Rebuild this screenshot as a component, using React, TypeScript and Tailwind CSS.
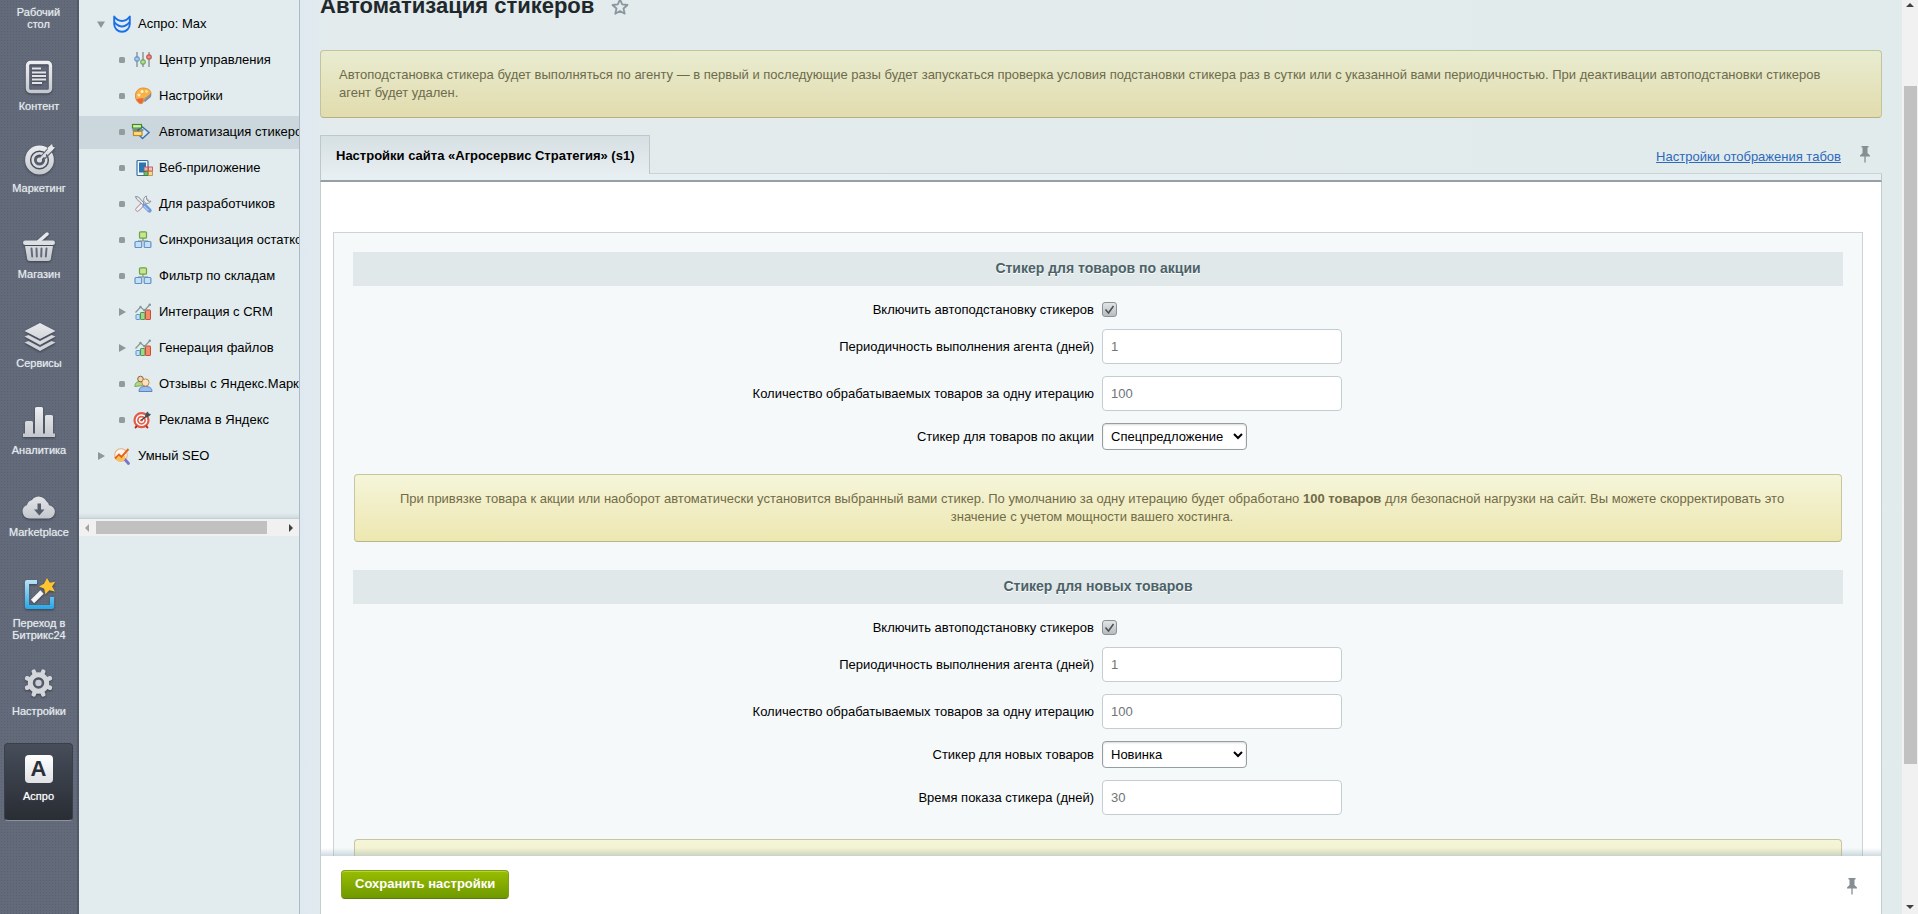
import { useState } from "react";
import type { ReactNode } from "react";

/* ---------- left bar icons ---------- */

function BarSvg({ children }: { children: ReactNode }) {
  return (
    <svg
      width="32"
      height="32"
      viewBox="0 0 32 32"
      className="overflow-visible drop-shadow-[0_1px_1px_rgba(30,35,45,0.6)]"
      aria-hidden="true"
    >
      <defs>
        <linearGradient id="silver" x1="0" y1="0" x2="0" y2="32" gradientUnits="userSpaceOnUse">
          <stop offset="0" stopColor="#f0f1f3" />
          <stop offset="1" stopColor="#c3c7cd" />
        </linearGradient>
        <linearGradient id="sky" x1="0" y1="0" x2="0" y2="32" gradientUnits="userSpaceOnUse">
          <stop offset="0" stopColor="#c4e6f6" />
          <stop offset="1" stopColor="#1fa6ea" />
        </linearGradient>
      </defs>
      {children}
    </svg>
  );
}

const contentIcon = (
  <BarSvg>
    <rect x="4.5" y="1.5" width="23" height="29" rx="3" fill="none" stroke="url(#silver)" strokeWidth="3.4" />
    <path d="M9 7.5h9M9 11.5h14M9 15h14M9 18.500h14M9 22h10" stroke="#e2e4e8" strokeWidth="1.8" />
  </BarSvg>
);

const marketingIcon = (
  <BarSvg>
    <circle cx="16.5" cy="17" r="12" fill="none" stroke="url(#silver)" strokeWidth="4.8" />
    <circle cx="16.5" cy="17" r="6.8" fill="none" stroke="#dadde1" strokeWidth="2.6" />
    <circle cx="16.5" cy="17" r="2.6" fill="#dadde1" />
    <path d="M17.5 14L27 3.5M20 17.500L30 7.500" stroke="#636a79" strokeWidth="1.300" />
    <path d="M16.5 17L27.500 5.500" stroke="#dadde1" strokeWidth="2.4" />
    <path d="M24.500 8.500l.5-4 4-3.500.8 2.700 2.200.8-3.500 3.800z" fill="#e6e8eb" />
  </BarSvg>
);

const shopIcon = (
  <BarSvg>
    <path d="M15 13L24 5" stroke="#e6e8eb" strokeWidth="3.400" strokeLinecap="round" />
    <rect x="0" y="11.500" width="32" height="4.500" rx="2.200" fill="#dcdfe3" />
    <path d="M2 17h28l-2 12a3 3 0 0 1-3 3H7a3 3 0 0 1-3-3z" fill="url(#silver)" />
    <path d="M8.500 19.500l.7 8M13.500 19.500l.3 8M18.500 19.500l-.3 8M23.500 19.500l-.7 8" stroke="#636a79" strokeWidth="2" strokeLinecap="round" />
  </BarSvg>
);

const servicesIcon = (
  <BarSvg>
    <path d="M17 5l15.500 8L17 21 1.500 13z" fill="url(#silver)" />
    <path d="M1.500 18.500l4-1.500L17 23l11.500-6 4 1.500L17 27z" fill="#d5d8dd" />
    <path d="M1.500 24.500l4-1.500L17 29l11.500-6 4 1.500L17 33z" fill="#cfd3d8" />
  </BarSvg>
);

const analyticsIcon = (
  <BarSvg>
    <path
      d="M0 28.500h2V17.500a1.500 1.500 0 0 1 1.500-1.500h5a1.500 1.500 0 0 1 1.500 1.500V28.500h2V3.500A1.500 1.500 0 0 1 13.500 2h5A1.500 1.500 0 0 1 20 3.500V28.500h2V11.500A1.500 1.500 0 0 1 23.500 10h5a1.500 1.500 0 0 1 1.500 1.500V28.500h2v3.500H0z"
      fill="url(#silver)"
    />
  </BarSvg>
);

const cloudIcon = (
  <BarSvg>
    <path
      d="M6.500 31.500A7 7 0 0 1 4 18 6.500 6.500 0 0 1 9 13 8.500 8.500 0 0 1 23.500 14.500a5.500 5.500 0 0 1 2.500 3.700A6.700 6.700 0 0 1 26 31.500z"
      fill="url(#silver)"
    />
    <path d="M14.500 16.500h3.500v6h3.500l-5.200 6-5.300-6h3.500z" fill="#565d6b" />
  </BarSvg>
);

const wandIcon = (
  <BarSvg>
    <path d="M14 4H4v25h25V19" fill="none" stroke="url(#sky)" strokeWidth="4.200" strokeLinejoin="round" />
    <path d="M9.500 23.500L19 14" stroke="#f4f6f8" strokeWidth="4.600" />
    <path d="M24 0l2.800 4.800 5.500-1-3.200 4.700 2.800 5-5.500-1.200-4 4-1.200-5.500-5.200-2.300 5-2.700z" fill="#ffc531" />
  </BarSvg>
);

const gearIcon = (
  <BarSvg>
    <g transform="translate(15.500 17)">
      {[22.5, 67.5, 112.5, 157.5, 202.5, 247.5, 292.5, 337.5].map((a) => (
        <rect key={a} x="-2.200" y="-14.500" width="4.400" height="8" rx="1.800" fill="#d3d6db" transform={`rotate(${a})`} />
      ))}
      <circle r="8.200" fill="none" stroke="#d3d6db" strokeWidth="5" />
      <circle r="3.200" fill="#c9cdd3" />
    </g>
  </BarSvg>
);

const asproIcon = (
  <span className="mt-1 flex h-7 w-7 items-center justify-center rounded bg-gradient-to-b from-white to-[#dfe1e4] text-[22px] leading-7 font-black text-[#2b2f37]">
    A
  </span>
);

const barItems = [
  { label: "Контент", icon: contentIcon, gap: "mt-[31px]" },
  { label: "Маркетинг", icon: marketingIcon, gap: "mt-[31px]" },
  { label: "Магазин", icon: shopIcon, gap: "mt-[35px]" },
  { label: "Сервисы", icon: servicesIcon, gap: "mt-[38px]" },
  { label: "Аналитика", icon: analyticsIcon, gap: "mt-9" },
  { label: "Marketplace", icon: cloudIcon, gap: "mt-[31px]" },
  { label: "Переход в Битрикс24", icon: wandIcon, gap: "mt-10" },
  { label: "Настройки", icon: gearIcon, gap: "mt-[25px]" },
];

function IconBar() {
  return (
    <nav className="flex w-[79px] shrink-0 flex-col overflow-hidden border-r-2 border-[#535a69] bg-[#636a79] bg-[radial-gradient(rgba(50,56,72,0.2)_25%,transparent_30%)] bg-[length:3px_3px] text-center text-[11px] leading-3 text-[#e3eaee] [text-shadow:0_0_1px_rgba(227,234,238,0.7)]">
      <a href="#desktop" className="px-3 pt-[6px]">
        Рабочий стол
      </a>
      {barItems.map((item) => (
        <a key={item.label} href="#" className={`flex flex-col items-center gap-[7px] pr-[7px] pl-2 ${item.gap}`}>
          {item.icon}
          <span>{item.label}</span>
        </a>
      ))}
      <a
        href="#aspro"
        className="mx-1 mt-[26px] flex h-[78px] flex-col items-center gap-[7px] rounded-[4px] border border-[#3a404b] border-b-[#8d939e] bg-gradient-to-b from-[#474e5a] to-[#292d34] pt-[7px] text-white"
      >
        <span className="h-8">{asproIcon}</span>
        Аспро
      </a>
    </nav>
  );
}

/* ---------- module menu ---------- */

function MenuSvg({ children }: { children: ReactNode }) {
  return (
    <svg width="18" height="18" viewBox="0 0 18 18" className="shrink-0 overflow-visible" aria-hidden="true">
      {children}
    </svg>
  );
}

const shieldIcon = (
  <MenuSvg>
    <path d="M1.200 1.500C4 5.500 7 6 9 6s5-.5 7.800-4.500V9A7.800 7.800 0 0 1 1.200 9z" fill="none" stroke="#1b6fe8" strokeWidth="1.900" strokeLinejoin="round" />
    <path d="M1.500 7.500C5 11 7 11.500 9 11.500s4-.5 7.500-4" fill="none" stroke="#1b6fe8" strokeWidth="1.900" />
  </MenuSvg>
);

const slidersIcon = (
  <MenuSvg>
    <path d="M3 1v15M9 1v15M15 1v15" stroke="#7a8186" strokeWidth="1.200" />
    <rect x=".8" y="6" width="4.400" height="4" rx="1" fill="#a3cbee" stroke="#4a82bd" strokeWidth=".9" />
    <rect x="6.800" y="9" width="4.400" height="4" rx="1" fill="#b5df94" stroke="#55933a" strokeWidth=".9" />
    <rect x="12.800" y="4" width="4.400" height="4" rx="1" fill="#f08a7e" stroke="#c0352b" strokeWidth=".9" />
  </MenuSvg>
);

const paletteIcon = (
  <MenuSvg>
    <path d="M9 1C4 1 .8 5 1.500 10c.6 4.500 4 7.500 6.500 6.500s.5-3.500 2.500-5 6 .5 6.500-4S13.500 1 9 1z" fill="#f7b04a" stroke="#d98428" strokeWidth=".8" />
    <path d="M2.500 12c1.500 4 4 5 5.500 4s0-3.500 2-5z" fill="#e8663c" />
    <circle cx="5" cy="8" r="1.500" fill="#fff0b0" />
    <circle cx="8" cy="4.500" r="1.500" fill="#fff5c8" />
    <circle cx="12.500" cy="4.500" r="1.400" fill="#ffe28a" />
    <path d="M9 13.500L17 6v4l-6 5z" fill="#8b9095" />
  </MenuSvg>
);

const flowIcon = (
  <MenuSvg>
    <path d="M8.500 4L15 9.500 8.500 15.500 4 11V7z" fill="#d7e7f5" stroke="#3e74ad" strokeWidth="1.500" />
    <rect x="-1.500" y="1.500" width="9" height="3.600" fill="#d6efae" stroke="#3d8a26" strokeWidth="1.200" />
    <rect x="-.5" y="8.500" width="8.500" height="4" fill="#ffdf80" stroke="#c08a26" strokeWidth="1.200" />
    <path d="M-1.500 7h11" stroke="#33536a" strokeWidth="1.100" />
  </MenuSvg>
);

const webAppIcon = (
  <MenuSvg>
    <rect x="3" y="1.500" width="11" height="15" rx="1" fill="#f6f9fb" stroke="#3d6f9f" strokeWidth="1.200" />
    <rect x="5" y="3.500" width="7" height="10" fill="#2578b8" />
    <rect x="10" y="8" width="4" height="4" fill="#f0b0ab" stroke="#bd4a4a" strokeWidth=".8" />
    <rect x="14.500" y="8" width="4" height="4" fill="#f3c2c2" stroke="#bd4a4a" strokeWidth=".8" />
    <rect x="10" y="12.500" width="4" height="4" fill="#78b86c" stroke="#39803a" strokeWidth=".8" />
    <rect x="14.500" y="12.500" width="4" height="4" fill="#f5da8c" stroke="#b8853a" strokeWidth=".8" />
  </MenuSvg>
);

const toolsIcon = (
  <MenuSvg>
    <path d="M3.500 14.500L12.500 5.500" stroke="#a9868d" strokeWidth="4.400" strokeLinecap="round" />
    <path d="M3.500 14.500L12.500 5.500" stroke="#f6eff2" strokeWidth="2.800" strokeLinecap="round" />
    <path d="M12.500 1a3.800 3.800 0 1 0 4.500 5l-2.500.5-2-2z" fill="#eceff1" stroke="#8a9299" strokeWidth=".9" />
    <path d="M1.500 1.500l3 .5 5.500 6-1.500 1.500-6-5.500z" fill="#e6eaee" stroke="#7b858d" strokeWidth=".9" />
    <path d="M10.500 10.500l5 5" stroke="#7199dc" strokeWidth="4.400" strokeLinecap="round" />
    <path d="M10 11l4.500 4.500" stroke="#b4cdf2" strokeWidth="1.200" />
  </MenuSvg>
);

const blocksIcon = (
  <MenuSvg>
    <path d="M9 7v3M4.500 12v-2h9v2" fill="none" stroke="#7c868d" strokeWidth="1.100" />
    <rect x="5.500" y=".8" width="7" height="6.400" rx="1" fill="#c9e68e" stroke="#6ba447" strokeWidth="1.200" />
    <rect x="1" y="10.500" width="6.700" height="6" rx="1" fill="#c6dff5" stroke="#5f92c8" strokeWidth="1.200" />
    <rect x="10.200" y="10.500" width="6.700" height="6" rx="1" fill="#c6dff5" stroke="#5f92c8" strokeWidth="1.200" />
  </MenuSvg>
);

const chartIcon = (
  <MenuSvg>
    <rect x="2" y="11.500" width="4" height="5" rx=".6" fill="#c3e2f8" stroke="#5b93c6" />
    <rect x="6.500" y="9.500" width="4.500" height="7" rx=".6" fill="#9ed78d" stroke="#4a9750" />
    <rect x="11.500" y="7" width="5" height="9.500" rx=".6" fill="#f28a6c" stroke="#cc4a34" />
    <path d="M1.500 9.500L6.500 4l4 3.500L16 1.500" fill="none" stroke="#7f9894" strokeWidth="1.200" />
    <circle cx="6.500" cy="4" r="1.200" fill="#7f9894" />
    <circle cx="10.500" cy="7.200" r="1.200" fill="#7f9894" />
    <circle cx="15.800" cy="1.800" r="1.200" fill="#7f9894" />
  </MenuSvg>
);

const peopleIcon = (
  <MenuSvg>
    <path d="M.8 11.500c0-3.500 2-5 5-5s4 1.500 4 4z" fill="#b4d68a" stroke="#6a9a4a" strokeWidth=".8" />
    <circle cx="6.500" cy="4" r="2.800" fill="#f5d3ae" stroke="#7b5732" strokeWidth=".9" />
    <path d="M5 16.500c0-4 2.500-5 6.500-5s6.500 1.500 6.500 5z" fill="#9bbdec" stroke="#4d7cc0" strokeWidth=".9" />
    <circle cx="11.500" cy="7.500" r="3.600" fill="#fae3c4" stroke="#c48a3e" strokeWidth="1" />
  </MenuSvg>
);

const targetIcon = (
  <MenuSvg>
    <circle cx="7.500" cy="9.200" r="7" fill="#fff" stroke="#e25a48" strokeWidth="2.200" />
    <circle cx="7.500" cy="9.200" r="3.600" fill="#fff" stroke="#e4604c" strokeWidth="1.700" />
    <circle cx="7.500" cy="9.200" r="1.200" fill="#d33d30" />
    <path d="M8 8.800L15 3" stroke="#38424a" strokeWidth="1.400" />
    <path d="M11 5.500l1-3.500 2-1.500.5 2 2.500.5-1.500 2-3 1.500z" fill="#43505a" />
    <path d="M1 17l2-2M14 17L12 15" stroke="#a8301f" strokeWidth="1.800" />
  </MenuSvg>
);

const seoIcon = (
  <MenuSvg>
    <circle cx="8" cy="8" r="6.300" fill="#fdf6ef" stroke="#dfbf9a" strokeWidth="1.300" />
    <path d="M12 12.500l3.500 4" stroke="#7a72cc" strokeWidth="2.800" strokeLinecap="round" />
    <path d="M2.500 12c3 3 7 3 9.500.5L12.500 8 9 11 6.500 9z" fill="#f7c14a" />
    <path d="M2 11.500L6 7.500l2.500 2.500L15.500 2" fill="none" stroke="#e8621d" strokeWidth="1.900" />
  </MenuSvg>
);

type Marker = "dot" | "open" | "closed";

const menuItems: { label: string; icon: ReactNode; marker: Marker; root?: boolean; active?: boolean }[] = [
  { label: "Аспро: Max", icon: shieldIcon, marker: "open", root: true },
  { label: "Центр управления", icon: slidersIcon, marker: "dot" },
  { label: "Настройки", icon: paletteIcon, marker: "dot" },
  { label: "Автоматизация стикеров", icon: flowIcon, marker: "dot", active: true },
  { label: "Веб-приложение", icon: webAppIcon, marker: "dot" },
  { label: "Для разработчиков", icon: toolsIcon, marker: "dot" },
  { label: "Синхронизация остатков", icon: blocksIcon, marker: "dot" },
  { label: "Фильтр по складам", icon: blocksIcon, marker: "dot" },
  { label: "Интеграция с CRM", icon: chartIcon, marker: "closed" },
  { label: "Генерация файлов", icon: chartIcon, marker: "closed" },
  { label: "Отзывы с Яндекс.Маркета", icon: peopleIcon, marker: "dot" },
  { label: "Реклама в Яндекс", icon: targetIcon, marker: "dot" },
  { label: "Умный SEO", icon: seoIcon, marker: "closed", root: true },
];

function MarkerIcon({ marker }: { marker: Marker }) {
  return (
    <svg width="10" height="10" viewBox="0 0 10 10" className="shrink-0" aria-hidden="true">
      {marker === "dot" && <rect x="2" y="2" width="6" height="6" rx="1.500" fill="#939b9e" />}
      {marker === "open" && <path d="M1 2.500h8L5 9z" fill="#8f9699" />}
      {marker === "closed" && <path d="M2 1v8l7-4z" fill="#8f9699" />}
    </svg>
  );
}

function ModuleMenu() {
  return (
    <aside className="flex w-[221px] shrink-0 flex-col overflow-hidden border-r border-[#aab9c6] bg-[#e2ecee]">
      <ul className="pt-2 pb-[37px]">
        {menuItems.map((item) => (
          <li key={item.label} className="pb-[3px]">
            <a
              href="#"
              className={`flex h-[33px] items-center gap-[7px] pb-px text-[13px] whitespace-nowrap text-black ${
                item.root ? "pl-[17px]" : "pl-[38px]"
              } ${item.active ? "bg-[#cbd7dc]" : ""}`}
            >
              <MarkerIcon marker={item.marker} />
              {item.icon}
              <span>{item.label}</span>
            </a>
          </li>
        ))}
      </ul>
      <div className="h-[5px] bg-gradient-to-b from-transparent to-[#cddbe0]" />
      <div className="flex h-[18px] shrink-0 items-center border-t border-[#c6cfd2] bg-[#f1f1f1]">
        <svg width="17" height="10" viewBox="0 0 17 10" aria-hidden="true">
          <path d="M10 1v8L6 5z" fill="#a3a3a3" />
        </svg>
        <span className="h-[13px] w-[171px] bg-[#c1c1c1]" />
        <svg width="17" height="10" viewBox="0 0 17 10" className="ml-auto" aria-hidden="true">
          <path d="M7 1v8l4-4z" fill="#404040" />
        </svg>
      </div>
    </aside>
  );
}

/* ---------- form ---------- */

function PinIcon() {
  return (
    <svg width="10" height="17" viewBox="0 0 10 17" aria-hidden="true">
      <path d="M1.500 0h7v1.500h-1V7l2.500 2.500V10.500H0V9.500L2.500 7V1.500h-1z" fill="#858e93" />
      <path d="M5 10v6.500" stroke="#858e93" strokeWidth="1.300" />
    </svg>
  );
}

function Row({ id, label, children }: { id: string; label: string; children: ReactNode }) {
  return (
    <div className="flex items-center">
      <label htmlFor={id} className="w-1/2 pr-1 text-right leading-[15px]">
        {label}
      </label>
      <div className="flex w-1/2 pl-1">{children}</div>
    </div>
  );
}

function CheckRow({ id, label }: { id: string; label: string }) {
  const [checked, setChecked] = useState(true);
  return (
    <Row id={id} label={label}>
      <span className="relative flex">
        <input
          id={id}
          type="checkbox"
          checked={checked}
          onChange={(e) => setChecked(e.target.checked)}
          className="h-[15px] w-[15px] appearance-none rounded-[3px] border border-[#8d9194] bg-gradient-to-b from-[#e2e4e5] to-[#b9bcbe]"
        />
        {checked && (
          <svg width="15" height="15" viewBox="0 0 15 15" className="pointer-events-none absolute inset-0" aria-hidden="true">
            <path d="M3.500 7.500l3 3.500L11.500 4" fill="none" stroke="#4b4f52" strokeWidth="1.500" />
          </svg>
        )}
      </span>
    </Row>
  );
}

function TextRow({ id, label, value }: { id: string; label: string; value: string }) {
  return (
    <Row id={id} label={label}>
      <input
        id={id}
        type="text"
        defaultValue={value}
        className="h-[35px] w-60 rounded-[4px] border border-[#c4ced2] bg-white px-2 text-[13px] text-[#6f7577]"
      />
    </Row>
  );
}

function SelectRow({ id, label, options }: { id: string; label: string; options: string[] }) {
  return (
    <Row id={id} label={label}>
      <select
        id={id}
        className="h-[27px] w-[145px] rounded-[4px] border border-[#959ea1] bg-white px-1 text-[13px] text-black shadow-[inset_0_1px_2px_rgba(0,0,0,0.15)]"
      >
        {options.map((option) => (
          <option key={option}>{option}</option>
        ))}
      </select>
    </Row>
  );
}

function SectionTitle({ children }: { children: ReactNode }) {
  return (
    <h2 className="h-[34px] bg-[#e0e8ea] text-center text-[14px] leading-8 font-bold text-[#4b6267] [text-shadow:0_1px_0_#fff]">
      {children}
    </h2>
  );
}

function HelpNote({ children }: { children: ReactNode }) {
  return (
    <div className="mx-px rounded-[4px] border border-[#c8c59f] border-b-[#b9b58a] bg-gradient-to-b from-[#f5f5da] to-[#ede7b0] py-[15px] pr-[30px] pl-[18px] text-center leading-[18px] text-[#716b47]">
      {children}
    </div>
  );
}

export default function App() {
  return (
    <div className="flex h-screen overflow-hidden bg-[#e3ecee] font-['Liberation_Sans',Arial,sans-serif] text-[13px] text-black">
      <IconBar />
      <ModuleMenu />

      <main className="flex min-w-0 flex-1 flex-col bg-gradient-to-r from-[#dfe9f0] via-[#e3ebed] via-[2%] to-[#e2ebec] pr-5 pl-5">
        <div className="min-h-0 flex-1 overflow-hidden">
          <div className="-mt-2 flex items-center gap-[17px]">
            <h1 className="text-[22px] leading-7 font-bold text-[#20282b]">Автоматизация стикеров</h1>
            <button type="button" aria-label="Добавить в избранное">
              <svg width="18" height="17" viewBox="0 0 18 17" aria-hidden="true">
                <path
                  d="M9 1.500l2.200 4.900 5.300.6-4 3.500 1.200 5.200L9 13l-4.700 2.700 1.200-5.200-4-3.500 5.300-.6z"
                  fill="none"
                  stroke="#8a979f"
                  strokeWidth="1.800"
                  strokeLinejoin="round"
                />
              </svg>
            </button>
          </div>

          <div className="mt-[30px] rounded-[4px] border border-[#c2c49d] border-b-[#b4b183] bg-gradient-to-b from-[#e8ecd0] to-[#e2dcae] py-[15px] pr-[30px] pl-[18px] leading-[18px] text-[#6d6b4c]">
            Автоподстановка стикера будет выполняться по агенту — в первый и последующие разы будет запускаться проверка
            условия подстановки стикера раз в сутки или с указанной вами периодичностью. При деактивации автоподстановки
            стикеров агент будет удален.
          </div>

          <div className="mt-[17px] flex">
            <button
              type="button"
              className="h-[39px] border border-b-0 border-[#bcc8cc] bg-gradient-to-b from-[#d6dfe2] to-[#e7eef1] px-[15px] pt-px font-bold"
            >
              Настройки сайта «Агросервис Стратегия» (s1)
            </button>
            <div className="flex flex-1 items-start justify-end gap-[19px] border-b border-[#c9d4d8] pt-[11px] pr-3">
              <a href="#tabs" className="pt-px text-[#2d69bd] underline">
                Настройки отображения табов
              </a>
              <button type="button" aria-label="Закрепить вкладки">
                <PinIcon />
              </button>
            </div>
          </div>
          <div className="h-2 border-x border-b-2 border-x-[#bcc8cc] border-b-[#95a0a6] bg-[#e8eff2]" />

          <div className="border-x border-[#c3ced1] bg-white pt-[50px] pr-[18px] pl-3">
            <div className="border border-b-0 border-[#ccd4d6] bg-[#f5f9fa] px-[19px] pt-[19px]">
              <SectionTitle>Стикер для товаров по акции</SectionTitle>
              <div className="flex flex-col gap-3 pt-4 pb-6">
                <CheckRow id="stock-on" label="Включить автоподстановку стикеров" />
                <TextRow id="stock-period" label="Периодичность выполнения агента (дней)" value="1" />
                <TextRow id="stock-count" label="Количество обрабатываемых товаров за одну итерацию" value="100" />
                <SelectRow
                  id="stock-sticker"
                  label="Стикер для товаров по акции"
                  options={["Спецпредложение", "Новинка"]}
                />
              </div>
              <HelpNote>
                При привязке товара к акции или наоборот автоматически установится выбранный вами стикер. По умолчанию за
                одну итерацию будет обработано <b>100 товаров</b> для безопасной нагрузки на сайт. Вы можете
                скорректировать это значение с учетом мощности вашего хостинга.
              </HelpNote>

              <div className="mt-7">
                <SectionTitle>Стикер для новых товаров</SectionTitle>
              </div>
              <div className="flex flex-col gap-3 pt-4 pb-6">
                <CheckRow id="new-on" label="Включить автоподстановку стикеров" />
                <TextRow id="new-period" label="Периодичность выполнения агента (дней)" value="1" />
                <TextRow id="new-count" label="Количество обрабатываемых товаров за одну итерацию" value="100" />
                <SelectRow
                  id="new-sticker"
                  label="Стикер для новых товаров"
                  options={["Новинка", "Спецпредложение"]}
                />
                <TextRow id="new-days" label="Время показа стикера (дней)" value="30" />
              </div>
              <HelpNote>&nbsp;</HelpNote>
            </div>
          </div>
        </div>

        <footer className="relative flex h-[58px] shrink-0 items-start justify-between border-x border-[#c3ced1] bg-white pt-[14px] pr-6 pl-5">
          <div className="absolute inset-x-0 -top-2 h-2 bg-gradient-to-b from-transparent to-[rgba(140,165,175,0.4)]" />
          <button
            type="button"
            className="h-[29px] rounded-[4px] border border-[#7d9f1b] border-b-[#5f7c0a] bg-gradient-to-b from-[#99bd00] to-[#6f9900] px-[13px] pb-[2px] text-[13px] leading-6 font-bold text-white shadow-[inset_0_1px_0_#b5d334]"
          >
            Сохранить настройки
          </button>
          <button type="button" className="mt-2" aria-label="Закрепить панель">
            <PinIcon />
          </button>
        </footer>
      </main>

      <div className="flex w-4 shrink-0 flex-col items-center bg-[#f1f1f1]">
        <svg width="8" height="86" viewBox="0 0 8 86" className="shrink-0" aria-hidden="true">
          <path d="M0 7h8L4 3z" fill="#404040" />
        </svg>
        <div className="w-[13px] flex-[678] bg-[#c1c1c1]" />
        <div className="flex flex-[150] flex-col justify-end">
          <svg width="8" height="10" viewBox="0 0 8 10" aria-hidden="true">
            <path d="M0 1h8L4 5z" fill="#404040" />
          </svg>
        </div>
      </div>
    </div>
  );
}
